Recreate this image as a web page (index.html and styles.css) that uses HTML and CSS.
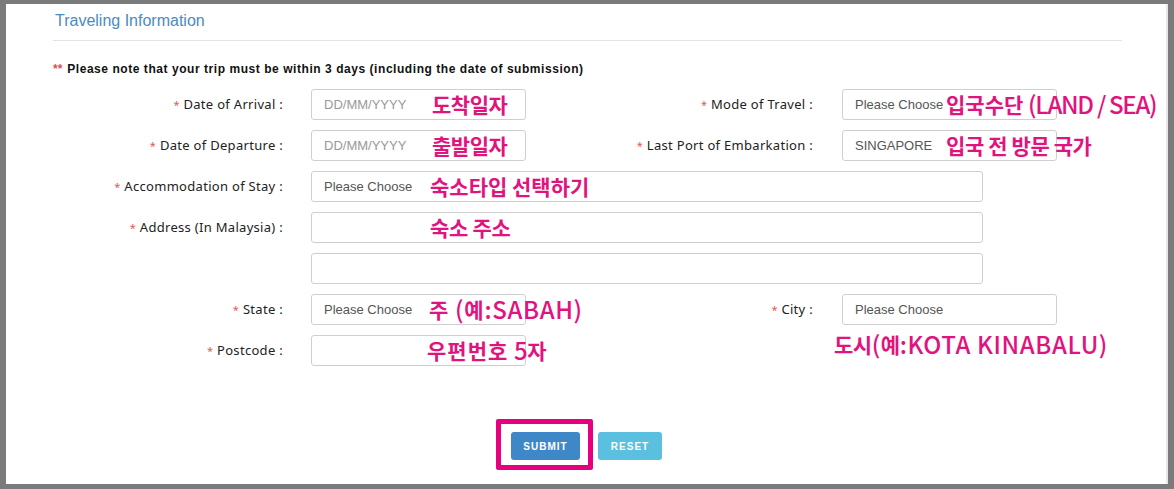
FILE: index.html
```html
<!DOCTYPE html>
<html lang="en">
<head>
<meta charset="utf-8">
<title>Traveling Information</title>
<link rel="stylesheet" href="styles.css">
</head>
<body>
<div class="frame">
  <div class="panel">
    <h2 class="title">Traveling Information</h2>
    <p class="note"><span class="req2">**</span> Please note that your trip must be within 3 days (including the date of submission)</p>

    <div class="form">
      <label class="lbl"><span class="req">*</span> Date of Arrival :</label>
      <div class="field"><div class="input ph">DD/MM/YYYY</div><span class="ann a-in">도착일자</span></div>
      <label class="lbl lbl-r"><span class="req">*</span> Mode of Travel :</label>
      <div class="field"><div class="input sel">Please Choose</div><span class="ann a-mode">입국수단 <span class="lat">(LAND / SEA)</span></span></div>

      <label class="lbl"><span class="req">*</span> Date of Departure :</label>
      <div class="field"><div class="input ph">DD/MM/YYYY</div><span class="ann a-in">출발일자</span></div>
      <label class="lbl lbl-r"><span class="req">*</span> Last Port of Embarkation :</label>
      <div class="field"><div class="input sel">SINGAPORE</div><span class="ann a-port">입국 전 방문 국가</span></div>

      <label class="lbl"><span class="req">*</span> Accommodation of Stay :</label>
      <div class="field wide"><div class="input sel">Please Choose</div><span class="ann a-in a-acc">숙소타입 선택하기</span></div>

      <label class="lbl"><span class="req">*</span> Address (In Malaysia) :</label>
      <div class="field wide"><div class="input"></div><span class="ann a-in a-addr">숙소 주소</span></div>

      <span class="lbl"></span>
      <div class="field wide"><div class="input"></div></div>

      <label class="lbl"><span class="req">*</span> State :</label>
      <div class="field"><div class="input sel">Please Choose</div><span class="ann a-state">주 <span class="lat">(</span>예<span class="lat">:SABAH)</span></span></div>
      <label class="lbl lbl-r"><span class="req">*</span> City :</label>
      <div class="field"><div class="input sel">Please Choose</div><span class="ann a-city">도시<span class="lat">(</span>예<span class="lat">:KOTA KINABALU)</span></span></div>

      <label class="lbl"><span class="req">*</span> Postcode :</label>
      <div class="field"><div class="input"></div><span class="ann a-post">우편번호 <span class="lat">5</span>자</span></div>
    </div>

    <div class="actions">
      <div class="btn-wrap">
        <button class="btn submit">SUBMIT</button>
        <span class="highlight"></span>
      </div>
      <button class="btn reset">RESET</button>
    </div>
  </div>
</div>
</body>
</html>
```

FILE: styles.css
```css
html, body {
  margin: 0;
  padding: 0;
  background: #7b7b7b;
}
body {
  width: 1174px;
  height: 489px;
  overflow: hidden;
}
.frame {
  box-sizing: border-box;
  width: 1174px;
  height: 489px;
  padding: 4px 6px 5px 6px;
  background: #7b7b7b;
}
.panel {
  box-sizing: border-box;
  height: 480px;
  background: #fff;
  border-right: 2px solid #e6e6e6;
  padding: 7px 0 0 47px;
  font-family: "Liberation Sans", Arial, sans-serif;
  color: #333;
}
.title {
  margin: 0;
  width: 1067px;
  font-size: 16px;
  font-weight: normal;
  line-height: 20px;
  color: #4a8bc2;
  padding: 0 0 9px 2px;
  border-bottom: 1px solid #e3e3e3;
}
.note {
  margin: 20px 0 0 0;
  font-size: 12px;
  font-weight: bold;
  line-height: 16px;
  color: #111;
  letter-spacing: 0.55px;
}
.req2 {
  color: #d9534f;
  font-weight: bold;
  margin-right: 1px;
  letter-spacing: 0;
}
.form {
  margin-top: 12px;
  display: grid;
  grid-template-columns: 258px 215px 316px 215px;
  grid-auto-rows: 31px;
  row-gap: 10px;
}
.lbl {
  font-family: "Noto Sans", "Liberation Sans", sans-serif;
  font-size: 13px;
  letter-spacing: 0.3px;
  color: #222;
  text-align: right;
  padding-right: 28px;
  line-height: 31px;
  white-space: nowrap;
}
.lbl-r {
  padding-right: 29px;
}
.req {
  color: #e05a5a;
  font-size: 11px;
}
.field {
  position: relative;
}
.field.wide {
  grid-column: 2 / 5;
  width: 672px;
}
.input {
  box-sizing: border-box;
  height: 31px;
  border: 1px solid #cfcfcf;
  border-radius: 3px;
  background: #fff;
  padding: 0 12px;
  font-size: 13px;
  line-height: 29px;
  color: #555;
  white-space: nowrap;
}
.input.ph {
  color: #999;
}
.ann {
  position: absolute;
  top: 0;
  font-family: "Noto Sans CJK KR", "Noto Sans", sans-serif;
  font-weight: 700;
  font-size: 21px;
  line-height: 30px;
  color: #e2137e;
  white-space: nowrap;
  letter-spacing: -0.5px;
}
.lat {
  font-size: 24px;
  font-weight: 500;
  letter-spacing: -0.6px;
  vertical-align: top;
  line-height: 29px;
}
.a-in { left: 121px; }
.a-acc { left: 119px; letter-spacing: 0; }
.a-addr { left: 119px; letter-spacing: -0.3px; }
.a-mode { left: 104px; letter-spacing: 0; }
.a-mode .lat { letter-spacing: -1.3px; }
.a-port { left: 104px; letter-spacing: -0.4px; }
.a-state { left: 118px; letter-spacing: 1px; }
.a-state .lat { letter-spacing: 0.6px; }
.a-post { left: 116px; letter-spacing: 1px; }
.a-city { left: -8px; top: 35px; }
.a-city .lat { letter-spacing: 0.6px; }
.actions {
  margin-top: 66px;
  width: 1067px;
  display: flex;
  justify-content: center;
  gap: 18px;
}
.btn-wrap {
  position: relative;
}
.btn {
  height: 28px;
  border: none;
  border-radius: 3px;
  color: #fff;
  font-family: "Liberation Sans", Arial, sans-serif;
  font-size: 10px;
  font-weight: bold;
  letter-spacing: 1px;
  padding: 0;
  display: block;
}
.submit {
  width: 69px;
  background: #3f88c8;
}
.reset {
  width: 64px;
  background: #5bc0e0;
}
.highlight {
  position: absolute;
  left: -15px;
  right: -13px;
  top: -13px;
  bottom: -10px;
  border: 5px solid #e6007e;
  border-radius: 2px;
}
```
